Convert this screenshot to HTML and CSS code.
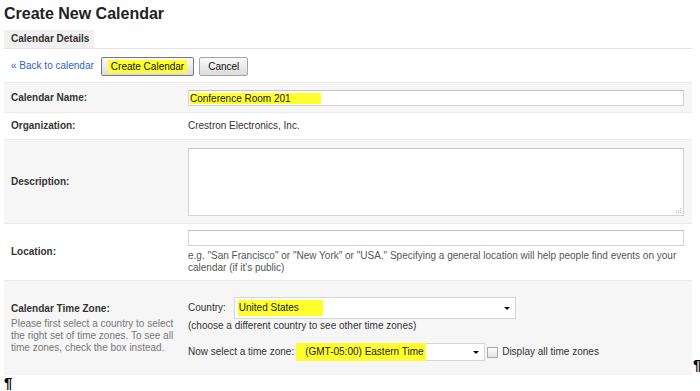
FILE: index.html
```html
<!DOCTYPE html>
<html>
<head lang="en">
    <meta charset="UTF-8">
    <title>Create New Calendar</title>
    <link rel="stylesheet" href="styles.css">
</head>
<body>
    <h1 class="page-title">Create New Calendar</h1>
    <div class="tabs">
        <span class="tab">Calendar Details</span>
    </div>
    <div class="toolbar">
        <a href="javascript:;" class="back-link">&laquo; Back to calendar</a>
        <button class="btn btn-default"><span class="mark">Create Calendar</span></button>
        <button class="btn">Cancel</button>
    </div>
    <div class="form-wrap">
        <div class="details">
            <div class="row row-name alt">
                <div class="label">Calendar Name:</div>
                <div class="value"><div class="field"><span class="mark">Conference Room 201</span></div></div>
            </div>
            <div class="row row-org">
                <div class="label">Organization:</div>
                <div class="value">Crestron Electronics, Inc.</div>
            </div>
            <div class="row row-desc alt">
                <div class="label">Description:</div>
                <div class="value">
                    <div class="textarea">
                        <svg class="grip" width="7" height="7" viewBox="0 0 7 7">
                            <rect x="5" y="1" width="1" height="1" fill="#bbb"/>
                            <rect x="5" y="3" width="1" height="1" fill="#bbb"/>
                            <rect x="3" y="3" width="1" height="1" fill="#bbb"/>
                            <rect x="5" y="5" width="1" height="1" fill="#bbb"/>
                            <rect x="3" y="5" width="1" height="1" fill="#bbb"/>
                            <rect x="1" y="5" width="1" height="1" fill="#bbb"/>
                        </svg>
                    </div>
                </div>
            </div>
            <div class="row row-loc">
                <div class="label">Location:</div>
                <div class="value">
                    <div class="field"></div>
                    <div class="hint">e.g. "San Francisco" or "New York" or "USA." Specifying a general location will help people find events on your calendar (if it's public)</div>
                </div>
            </div>
            <div class="row row-tz alt">
                <div class="label">
                    Calendar Time Zone:
                    <span class="tz-desc">Please first select a country to select the right set of time zones. To see all time zones, check the box instead.</span>
                </div>
                <div class="value">
                    <div class="tz-line">
                        <span class="tz-name">Country:</span>
                        <div class="select select-country"><span class="mark">United States</span><i class="arrow"></i></div>
                    </div>
                    <div class="tz-note">(choose a different country to see other time zones)</div>
                    <div class="tz-line tz-second">
                        <span class="tz-name">Now select a time zone:</span>
                        <div class="select select-zone"><span class="mark">(GMT-05:00) Eastern Time</span><i class="arrow"></i></div>
                        <span class="checkbox"></span>
                        <span class="check-label">Display all time zones</span>
                    </div>
                </div>
            </div>
        </div>
        <span class="pilcrow pilcrow-end">&para;</span>
    </div>
    <p class="pilcrow">&para;</p>
</body>
</html>
```

FILE: styles.css
```css
*{
    margin:0;  padding:0;
    box-sizing: border-box;
}
body{
    padding:0 4px;
    font-family: "Liberation Sans", Arial, sans-serif;
    font-size: 10px;
    line-height: 12px;
    color:#333;
    background:#fff;
    overflow: hidden;
}
.page-title{
    margin-top:4px;
    font-size:16px;
    line-height:20px;
    color:#222;
}
.tabs{
    margin-top:6px;
    border-bottom:1px solid #e4e4e4;
    width:688px;
}
.tab{
    display:inline-block;
    vertical-align:top;
    padding:0 5px 0 7px;
    line-height:18px;
    font-weight:bold;
    background-color:#f0f0f0;
}
.toolbar{
    display:flex;
    align-items:center;
    height:33px;
    padding:1px 0 0 7px;
}
.back-link{
    color:#2f64c6;
    text-decoration:none;
    margin-right:7px;
}
.btn{
    font-family: "Liberation Sans", Arial, sans-serif;
    font-size:10px;
    line-height:17px;
    height:19px;
    padding:0 8px;
    margin-right:5px;
    color:#111;
    border:1px solid #a6a6a6;
    border-radius:2px;
    background:linear-gradient(#fafafa,#dcdcdc);
}
.btn-default{
    padding:0 9px;
    border-color:#7a7a7a;
}
.mark{
    background-color:#ffff2e;
}
.btn .mark{
    padding:1px 3px;
    margin:0 -3px;
}
.form-wrap{
    display:flex;
    align-items:flex-end;
}
.details{
    width:688px;
    border-top:1px solid #ebebeb;
}
.row{
    display:flex;
    align-items:center;
    border-bottom:1px solid #ebebeb;
}
.row.alt{
    background-color:#f6f6f6;
}
.row-name{ height:30px; }
.row-org{ height:27px; }
.row-desc{ height:84px; }
.row-loc{ height:57px; }
.row-tz{ height:94px; border-bottom:none; }
.label{
    flex:0 0 184px;
    padding:0 7px;
    font-weight:bold;
    color:#333;
}
.value{
    flex:1;
    padding-right:8px;
}
.field{
    height:16px;
    width:496px;
    padding:1px 1px;
    line-height:13px;
    background:#fff;
    border:1px solid #d3d3d3;
    border-top-color:#c4c4c4;
    color:#222;
}
.field .mark{
    padding-right:30px;
}
.textarea{
    position:relative;
    height:68px;
    width:496px;
    background:#fff;
    border:1px solid #d3d3d3;
    border-top-color:#c4c4c4;
}
.grip{
    position:absolute;
    right:1px;
    bottom:1px;
}
.hint{
    margin-top:4px;
    color:#555;
}
.tz-desc{
    display:block;
    margin-top:3px;
    font-weight:normal;
    color:#777;
}
.row-tz .value{
    padding-top:2px;
}
.tz-line{
    display:flex;
    align-items:center;
}
.tz-name{
    margin-right:8px;
}
.select{
    position:relative;
    display:flex;
    align-items:center;
    background:#fff;
    border:1px solid #d6d6d6;
    color:#222;
}
.select-country{
    width:282px;
    height:22px;
    padding-left:3px;
}
.select-country .mark{
    padding:2px 24px 2px 1px;
}
.select-zone{
    width:187px;
    height:18px;
    margin-left:-4px;
}
.select-zone .mark{
    padding:3px 2px 3px 9px;
    margin-left:-3px;
}
.arrow{
    position:absolute;
    right:5px;
    top:50%;
    margin-top:-1px;
    border-left:3px solid transparent;
    border-right:3px solid transparent;
    border-top:3px solid #111;
}
.tz-note{
    margin-top:1px;
}
.tz-second{
    margin-top:11px;
}
.checkbox{
    display:inline-block;
    width:11px;
    height:11px;
    margin:0 4px 0 2px;
    border:1px solid #a9a9a9;
    background:linear-gradient(#fdfdfd,#e4e4e4);
}
.pilcrow{
    font-size:15px;
    line-height:15px;
    font-weight:bold;
    color:#000;
}
.pilcrow-end{
    margin:0 0 3px 1px;
}
```
